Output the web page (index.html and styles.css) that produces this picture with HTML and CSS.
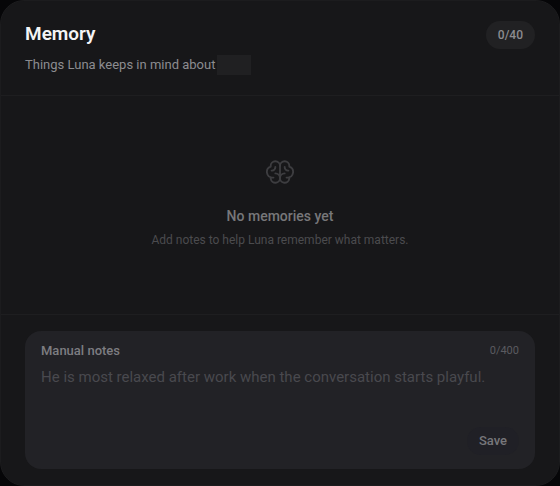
FILE: index.html
```html
<!DOCTYPE html>
<html lang="en">
<head>
    <meta charset="UTF-8">
    <meta name="viewport" content="width=device-width, initial-scale=1.0">
    <title>Memory</title>
    <link rel="stylesheet" href="styles.css">
</head>
<body>
    <main class="panel">
        <header class="header">
            <div>
                <h1>Memory</h1>
                <p class="subtitle">Things Luna keeps in mind about<span class="name"></span></p>
            </div>
            <span class="badge">0/40</span>
        </header>

        <section class="empty">
            <svg class="brain" viewBox="8 24 240 200" aria-hidden="true">
                <path d="M88 136a40 40 0 1 1-39.600 45.600V168.600M72 172H64A48 48 0 0 1 48 78.730V72a40 40 0 0 1 80 0V176M56 112h4a28 28 0 0 0 28-28v-4"/>
                <path d="M168 136a40 40 0 1 0 39.600 45.600V168.600M184 172H192A48 48 0 0 0 208 78.730V72a40 40 0 0 0-80 0M200 112h-4a28 28 0 0 1-28-28v-4"/>
            </svg>
            <h2>No memories yet</h2>
            <p>Add notes to help Luna remember what matters.</p>
        </section>

        <form class="footer">
            <div class="notes">
                <div class="notes-top">
                    <label for="notes">Manual notes</label>
                    <span class="count">0/400</span>
                </div>
                <textarea id="notes" maxlength="400" placeholder="He is most relaxed after work when the conversation starts playful."></textarea>
                <button class="save" type="button">Save</button>
            </div>
        </form>
    </main>
</body>
</html>
```
FILE: styles.css
```css
* {
    box-sizing: border-box;
}

body {
    margin: 0;
    background-color: #060608;
    font-family: Roboto, "Liberation Sans", sans-serif;
}

h1, h2, p {
    margin: 0;
}

.panel {
    display: flex;
    flex-direction: column;
    min-height: 100vh;
    background-color: #171719;
    border: 1px solid #1c1c1e;
    border-radius: 24px;
    overflow: hidden;
}

.header {
    display: flex;
    justify-content: space-between;
    align-items: flex-start;
    padding: 20px 24px;
    border-bottom: 1px solid #1e1e20;
}

h1 {
    color: #f4f4f5;
    font-size: 19px;
    font-weight: 600;
    line-height: 26px;
}

.subtitle {
    display: flex;
    align-items: center;
    margin-top: 8px;
    color: #8c8c90;
    font-size: 13px;
    line-height: 20px;
}

.name {
    width: 34px;
    height: 20px;
    margin-left: 2px;
    background-color: #202022;
}

.badge {
    padding: 4px 12px;
    border-radius: 14px;
    background-color: #212123;
    color: #8c8c90;
    font-size: 12px;
    font-weight: 500;
    line-height: 20px;
}

.empty {
    display: flex;
    flex: 1;
    flex-direction: column;
    align-items: center;
    justify-content: center;
    padding: 24px;
    text-align: center;
}

.brain {
    width: 28px;
    height: 24px;
    margin-bottom: 22px;
    fill: none;
    stroke: #3d3d40;
    stroke-width: 16;
    stroke-linecap: round;
    stroke-linejoin: round;
}

h2 {
    color: #77777a;
    font-size: 14px;
    font-weight: 500;
    line-height: 20px;
}

.empty p {
    margin-top: 4px;
    color: #4b4b4e;
    font-size: 12px;
    line-height: 20px;
}

.footer {
    padding: 16px 24px;
    border-top: 1px solid #1e1e20;
}

.notes {
    display: flex;
    flex-direction: column;
    padding: 12px 16px 14px;
    border-radius: 16px;
    background-color: #222226;
}

.notes-top {
    display: flex;
    justify-content: space-between;
    color: #7d7d81;
    font-size: 13px;
    font-weight: 500;
    line-height: 16px;
}

.count {
    color: #5b5b60;
    font-size: 11px;
    font-weight: 400;
}

textarea {
    width: 100%;
    height: 54px;
    margin: 6px 0 8px;
    padding: 0;
    border: 0;
    outline: 0;
    resize: none;
    background: none;
    color: #d4d4d8;
    font-family: inherit;
    font-size: 15px;
    line-height: 24px;
}

textarea::placeholder {
    color: #49494e;
    opacity: 1;
}

.save {
    align-self: flex-end;
    padding: 4px 12px;
    border: 0;
    border-radius: 14px;
    background-color: #202026;
    color: #77777b;
    font-family: inherit;
    font-size: 13px;
    font-weight: 500;
    line-height: 20px;
    cursor: pointer;
}
```
